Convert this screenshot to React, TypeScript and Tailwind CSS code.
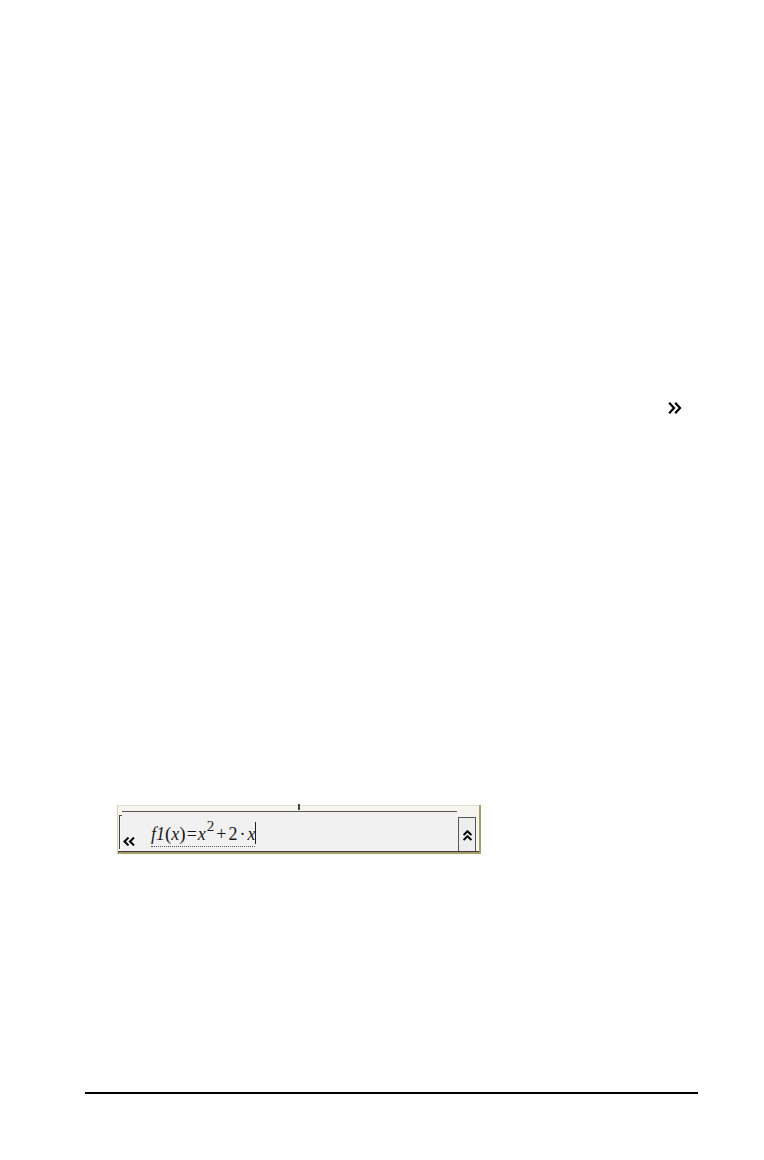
function ChevronsRight() {
  return (
    <svg width="14" height="12" viewBox="0 0 14 12" fill="none" stroke="#000" strokeWidth="2.2">
      <path d="M1.2 0.8 L6 6 L1.2 11.2" />
      <path d="M7.2 0.8 L12 6 L7.2 11.2" />
    </svg>
  );
}

function ChevronsLeft() {
  return (
    <svg width="12" height="9" viewBox="0 0 12 9" fill="none" stroke="#000" strokeWidth="2">
      <path d="M5.5 0.6 L1.5 4.5 L5.5 8.4" />
      <path d="M11 0.6 L7 4.5 L11 8.4" />
    </svg>
  );
}

function ChevronsUp() {
  return (
    <svg width="9" height="11" viewBox="0 0 9 11" fill="none" stroke="#000" strokeWidth="2">
      <path d="M0.6 5 L4.5 1.2 L8.4 5" />
      <path d="M0.6 10 L4.5 6.2 L8.4 10" />
    </svg>
  );
}

function EntryLine() {
  return (
    <div className="w-[364px] border-l border-r-2 border-b-2 border-l-[#d8d3b8] border-r-[#a59d6c] border-b-[#a59d6c] bg-[#f6f5ef]">
      <div className="relative h-[6px] border-t border-[#e3dfc8]">
        <div className="absolute left-[180px] top-[-2px] h-[6px] w-[2px] bg-[#444]" />
      </div>
      <div className="flex h-[41px] border-b border-[#3a3a3a]">
        <div className="w-[4px] pl-[1px] pt-[4px]">
          <div className="h-[34px] w-[4px] border-l border-t border-[#444]" />
        </div>
        <div className="relative flex w-[335px] items-end border-t border-[#555] bg-[#f1f1f1] pb-[4px]">
          <div className="mb-[1px] ml-[1px]">
            <ChevronsLeft />
          </div>
          <div className="ml-[16px] flex items-end">
            <span className="border-b border-dotted border-[#555] pb-[1px] text-[18px] leading-[20px] text-[#1a1a1a]">
              <i>f1</i>
              <span className="text-[19px]">(</span>
              <i>x</i>
              <span className="text-[19px]">)</span>
              <span className="mx-[1px]">=</span>
              <i>x</i>
              <span className="relative top-[-9px] ml-[1px] text-[15px]">2</span>
              <span className="mx-[2px]">+</span>2
              <span className="mx-[2px]">·</span>
              <i>x</i>
            </span>
            <div className="mb-[3px] h-[22px] w-[1px] bg-[#222]" />
          </div>
        </div>
        <div className="ml-[1px] mt-[6px] flex w-[18px] items-end justify-center border border-b-0 border-[#555] bg-[#eeeeee] pb-[10px]">
          <ChevronsUp />
        </div>
        <div className="w-[3px]" />
      </div>
    </div>
  );
}

export default function App() {
  return (
    <div className="h-[1160px] w-[764px] bg-white font-['Liberation_Serif',serif]">
      <div className="flex justify-end pr-[82px] pt-[402px]">
        <ChevronsRight />
      </div>
      <div className="ml-[117px] mt-[391px]">
        <EntryLine />
      </div>
      <div className="ml-[85px] mr-[66px] mt-[238px] h-[2px] bg-black" />
    </div>
  );
}
